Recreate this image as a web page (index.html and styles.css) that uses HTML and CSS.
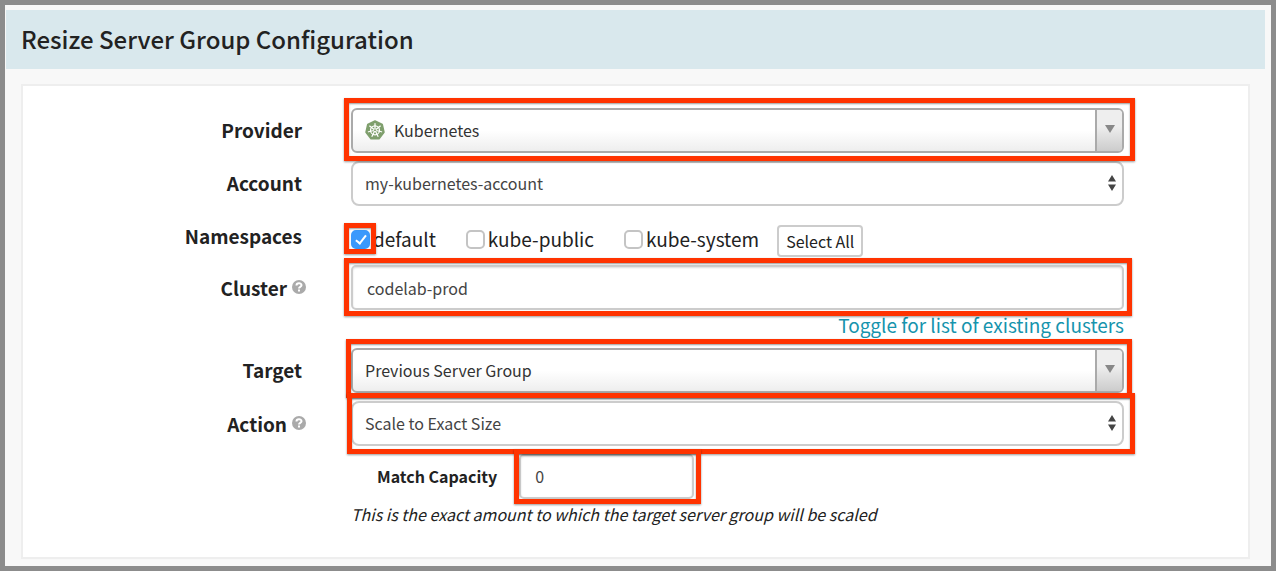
FILE: index.html
```html
<!DOCTYPE html>
<html lang="en">
<head>
<meta charset="utf-8">
<title>Resize Server Group Configuration</title>
<link rel="stylesheet" href="styles.css">
</head>
<body>
<main class="page">
  <header class="heading"><h1>Resize Server Group Configuration</h1></header>
  <form class="panel">
    <div class="row">
      <label class="name" for="provider">Provider</label>
      <div class="control mark mark-provider">
        <select class="field chosen with-icon" id="provider"><option>Kubernetes</option></select>
        <svg class="kube" viewBox="0 0 40 40" aria-hidden="true">
          <path fill="#7f9f6d" stroke="#7f9f6d" stroke-width="3" stroke-linejoin="round" d="M20 2 34.500 9 38 24.500 28 37.500H12L2 24.500 5.500 9Z"/>
          <g fill="none" stroke="#fff" stroke-width="2.500" stroke-linecap="round">
            <circle cx="20" cy="20.500" r="9"/>
            <path d="M20 20.500V7M20 20.500 30.600 12.100M20 20.500 33.200 23.500M20 20.500 25.900 32.700M20 20.500 14.100 32.700M20 20.500 6.800 23.500M20 20.500 9.400 12.100"/>
          </g>
          <circle cx="20" cy="20.500" r="2" fill="#7f9f6d"/>
        </svg>
        <span class="drop"><svg viewBox="0 0 10 8" width="10" height="8"><path fill="#888" d="M0 0h10L5 8z"/></svg></span>
      </div>
    </div>
    <div class="row">
      <label class="name" for="account">Account</label>
      <div class="control">
        <select class="field native" id="account"><option>my-kubernetes-account</option></select>
        <svg class="updown" viewBox="0 0 8 16" aria-hidden="true"><path fill="#444" d="M4 0 8 6.500H0zM0 9.500H8L4 16z"/></svg>
      </div>
    </div>
    <div class="row" role="group" aria-labelledby="namespaces">
      <span class="name" id="namespaces">Namespaces</span>
      <div class="checks">
        <label class="check"><span class="box mark mark-check"><input type="checkbox" checked></span>default</label>
        <label class="check"><span class="box"><input type="checkbox"></span>kube-public</label>
        <label class="check"><span class="box"><input type="checkbox"></span>kube-system</label>
        <button class="all" type="button">Select All</button>
      </div>
    </div>
    <div class="row">
      <div class="name has-help"><label for="cluster">Cluster</label>
        <svg class="help" viewBox="0 0 14 14" aria-hidden="true"><circle cx="7" cy="7" r="7" fill="#aaa"/><path fill="none" stroke="#fff" stroke-width="2" d="M4.500 5.500C4.500 2.500 9.500 2.500 9.500 5.300 9.500 7 7 6.800 7 8.500"/><path fill="#fff" d="M6 9.500h2v2H6z"/></svg>
      </div>
      <div class="control mark mark-cluster"><input class="field text" id="cluster" type="text" value="codelab-prod"></div>
      <a class="toggle" href="#">Toggle for list of existing clusters</a>
    </div>
    <div class="row">
      <label class="name" for="target">Target</label>
      <div class="control mark mark-target">
        <select class="field chosen" id="target"><option>Previous Server Group</option></select>
        <span class="drop"><svg viewBox="0 0 10 8" width="10" height="8"><path fill="#888" d="M0 0h10L5 8z"/></svg></span>
      </div>
    </div>
    <div class="row">
      <div class="name has-help"><label for="action">Action</label>
        <svg class="help" viewBox="0 0 14 14" aria-hidden="true"><circle cx="7" cy="7" r="7" fill="#aaa"/><path fill="none" stroke="#fff" stroke-width="2" d="M4.500 5.500C4.500 2.500 9.500 2.500 9.500 5.300 9.500 7 7 6.800 7 8.500"/><path fill="#fff" d="M6 9.500h2v2H6z"/></svg>
      </div>
      <div class="control mark mark-action">
        <select class="field native" id="action"><option>Scale to Exact Size</option></select>
        <svg class="updown" viewBox="0 0 8 16" aria-hidden="true"><path fill="#444" d="M4 0 8 6.500H0zM0 9.500H8L4 16z"/></svg>
      </div>
    </div>
    <div class="row">
      <div class="capacity">
        <label for="capacity">Match Capacity</label>
        <div class="control small mark mark-capacity"><input class="field text" id="capacity" type="text" inputmode="numeric" value="0"></div>
      </div>
      <p class="note">This is the exact amount to which the target server group will be scaled</p>
    </div>
  </form>
</main>
</body>
</html>
```
FILE: styles.css
```css
* { box-sizing: border-box; }

body {
  margin: 0;
  background: #f8f8f8;
  color: #222;
  font-family: "Noto Sans CJK SC", "Open Sans", sans-serif;
  font-size: 16px;
  line-height: 24px;
}

.page {
  min-height: 100vh;
  padding: 5px 6px 6px 1px;
  border: 5px solid #8c8c8c;
}

.heading {
  padding: 13px 15px 14px;
  background: #d9e8ed;
}

.heading h1 {
  margin: 0;
  font-size: 24px;
  font-weight: 500;
  line-height: 32px;
}

.panel {
  display: flex;
  flex-direction: column;
  gap: 8px;
  margin: 15px 15px 0;
  padding: 22px 124px 31px 0;
  border: 2px solid #eee;
  background: #fff;
}

.row {
  display: grid;
  grid-template-columns: 283px minmax(0, 1fr);
  column-gap: 45px;
}

.name {
  padding-right: 4px;
  font-size: 19px;
  font-weight: 700;
  line-height: 43px;
  text-align: right;
}

.has-help {
  display: flex;
  align-items: center;
  justify-content: flex-end;
  gap: 5px;
  height: 44px;
  padding-right: 0;
}

.help { width: 14px; height: 14px; }

.control { position: relative; }

.field {
  display: block;
  width: 100%;
  height: 45px;
  margin: 0;
  padding: 0 14px;
  border: 2px solid #ccc;
  border-radius: 8px;
  appearance: none;
  background: #fff;
  color: #444;
  font: inherit;
}

.text {
  border-radius: 5px;
  box-shadow: inset 0 1px 2px #ddd;
}

.native, .chosen { padding: 0 12px 2px; }

.chosen {
  border-color: #aaa;
  border-radius: 6px;
  background: linear-gradient(#fff 50%, #eee);
  color: #333;
}

.with-icon { padding-left: 41px; }

.kube {
  position: absolute;
  top: 12px;
  left: 14px;
  width: 20px;
  height: 20px;
}

.drop {
  position: absolute;
  inset: 2px 2px 2px auto;
  display: grid;
  place-items: center;
  width: 27px;
  padding-bottom: 3px;
  border-left: 2px solid #aaa;
  border-radius: 0 4px 4px 0;
  background: linear-gradient(#eee 40%, #ccc);
  pointer-events: none;
}

.updown {
  position: absolute;
  top: 14px;
  right: 8px;
  width: 8px;
  height: 16px;
  pointer-events: none;
}

.mark::after {
  content: "";
  position: absolute;
  z-index: 1;
  border: 5px solid #ff3300;
  box-shadow: 0 1px 2px #0006, inset 0 1px 2px #0006;
  pointer-events: none;
}

.mark-provider::after { inset: -10px -11px -8px -7px; }
.mark-check::after { inset: -7px -6px -5px -7px; }
.mark-cluster::after { inset: -7px -8px -6px -7px; }
.mark-target::after { inset: -9px -8px -5px -5px; }
.mark-action::after { inset: -8px -11px -8px -4px; }
.mark-capacity::after { inset: -5px -7px -5px -5px; }

.checks {
  display: flex;
  align-items: flex-end;
  gap: 30px;
  height: 43px;
  font-size: 19px;
}

.check {
  display: flex;
  align-items: center;
  gap: 3px;
  padding-bottom: 2px;
  line-height: 32px;
}

.box { position: relative; }

.box input {
  display: grid;
  place-items: center;
  width: 19px;
  height: 19px;
  margin: 0;
  border: 2px solid #c4c4c4;
  border-radius: 5px;
  appearance: none;
  background: #fff;
}

.box input:checked {
  border-color: #3b99fc;
  background: #3b99fc;
}

.box input:checked::before {
  content: "";
  width: 4px;
  height: 9px;
  margin-bottom: 2px;
  border: solid #fff;
  border-width: 0 2px 2px 0;
  rotate: 38deg;
}

.all {
  height: 32px;
  margin-left: -12px;
  padding: 0 7px;
  border: 2px solid #ccc;
  border-radius: 4px;
  background: #fff;
  color: #222;
  font: inherit;
  font-size: 16px;
  line-height: 28px;
}

.toggle {
  grid-column: 2;
  justify-self: end;
  padding: 3px 0;
  color: #1694ad;
  font-size: 19px;
  text-decoration: none;
}

.capacity {
  grid-column: 2;
  display: flex;
  align-items: center;
  gap: 22px;
  padding-left: 26px;
  font-weight: 700;
}

.capacity label { padding-bottom: 2px; }

.small { width: 175px; font-weight: 400; }

.small .text { padding: 0 14px 2px; }

.note {
  grid-column: 2;
  margin: 3px 0 0;
  font-style: italic;
}
```
